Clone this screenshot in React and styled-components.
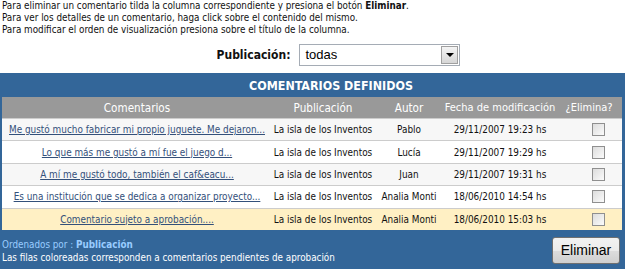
import React from "react";
import styled, { createGlobalStyle } from "styled-components";

const GlobalStyle = createGlobalStyle`
  body {
    margin: 0;
    background: #ffffff;
    font-family: "DejaVu Sans Condensed", "DejaVu Sans", sans-serif;
    color: #000;
  }
`;

const Page = styled.div`
  width: 625px;
  height: 269px;
  overflow: hidden;
  display: flex;
  flex-direction: column;
`;

const Intro = styled.div`
  padding: 0 2px;
  font-size: 9.8px;
  line-height: 12px;
  color: #111;
`;

const FilterRow = styled.div`
  display: flex;
  align-items: center;
  justify-content: center;
  gap: 9px;
  height: 37px;
  padding-left: 52px;
`;

const Label = styled.span`
  font-size: 12px;
  font-weight: bold;
  color: #111;
`;

const Select = styled.div`
  width: 161px;
  height: 22px;
  border: 1px solid #a5acb5;
  display: flex;
  align-items: center;
  justify-content: space-between;
  font-family: "Liberation Sans", Arial, sans-serif;
  font-size: 13px;
  padding-left: 5px;
  box-sizing: border-box;
  background: #fff;
`;

const Arrow = styled.div`
  width: 17px;
  height: 18px;
  margin-right: 1px;
  border: 1px solid #a0a0a0;
  box-sizing: border-box;
  background: linear-gradient(#f4f4f4, #d6d6d6);
  display: flex;
  align-items: center;
  justify-content: center;
  &::after {
    content: "";
    border-left: 4px solid transparent;
    border-right: 4px solid transparent;
    border-top: 4px solid #000;
    margin-top: 1px;
  }
`;

const Panel = styled.div`
  flex: 1;
  background: #336699;
  padding: 0 3px 0 2px;
  display: flex;
  flex-direction: column;
`;

const Title = styled.div`
  height: 24px;
  display: flex;
  align-items: center;
  justify-content: center;
  padding-left: 38px;
  color: #fff;
  font-weight: bold;
  font-size: 12.4px;
`;

const Table = styled.table`
  width: 620px;
  table-layout: fixed;
  border-collapse: collapse;
  font-size: 9.9px;
`;

const Th = styled.th`
  background: #999999;
  color: #fff;
  font-weight: normal;
  font-size: ${(p) => p.$size || "11.6px"};
  height: 21px;
  padding: 0;
  white-space: nowrap;
  width: ${(p) => p.$w};
`;

const Tr = styled.tr`
  background: ${(p) => (p.$pending ? "#fff0c4" : p.$alt ? "#f7f7f7" : "#ffffff")};
  border-top: 1px solid #cccccc;
`;

const Td = styled.td`
  height: 21.4px;
  padding: 0;
  text-align: center;
  white-space: nowrap;
  overflow: hidden;
  color: #111;
`;

const CommentLink = styled.a`
  color: #33507a;
  text-decoration: underline;
  cursor: pointer;
`;

const Check = styled.span`
  display: inline-block;
  width: 13px;
  height: 13px;
  margin-left: 18px;
  box-sizing: border-box;
  border: 1px solid #8f8f8f;
  background: linear-gradient(135deg, #dcdcdc, #fbfbfb);
  vertical-align: middle;
`;

const Footer = styled.div`
  flex: 1;
  display: flex;
  align-items: center;
  justify-content: space-between;
`;

const FooterText = styled.div`
  font-size: 9.8px;
  line-height: 13px;
  color: #fff;
  padding-top: 4px;
`;

const Sort = styled.div`
  color: #99ccff;
  b {
    font-weight: bold;
  }
`;

const Button = styled.button`
  font-family: "Liberation Sans", Arial, sans-serif;
  font-size: 14px;
  color: #000;
  width: 68px;
  height: 27px;
  padding: 0;
  border: 1px solid #707070;
  border-radius: 3px;
  background: linear-gradient(#f2f2f2 0%, #ebebeb 50%, #dddddd 51%, #cfcfcf 100%);
  margin-top: 2px;
  margin-right: 2px;
`;

const rows = [
  ["Me gustó mucho fabricar mi propio juguete. Me dejaron...", "Pablo", "29/11/2007 19:23 hs"],
  ["Lo que más me gustó a mí fue el juego d...", "Lucía", "29/11/2007 19:29 hs"],
  ["A mí me gustó todo, también el caf&eacu...", "Juan", "29/11/2007 19:31 hs"],
  ["Es una institución que se dedica a organizar proyecto...", "Analia Monti", "18/06/2010 14:54 hs"],
  ["Comentario sujeto a aprobación....", "Analia Monti", "18/06/2010 15:03 hs", true],
];

export default function App() {
  return (
    <Page>
      <GlobalStyle />
      <Intro>
        Para eliminar un comentario tilda la columna correspondiente y presiona el botón <b>Eliminar</b>.
        <br />
        Para ver los detalles de un comentario, haga click sobre el contenido del mismo.
        <br />
        Para modificar el orden de visualización presiona sobre el título de la columna.
      </Intro>
      <FilterRow>
        <Label>Publicación:</Label>
        <Select>
          todas
          <Arrow />
        </Select>
      </FilterRow>
      <Panel>
        <Title>COMENTARIOS DEFINIDOS</Title>
        <Table>
          <thead>
            <tr>
              <Th $w="270px">Comentarios</Th>
              <Th $w="102px">Publicación</Th>
              <Th $w="70px">Autor</Th>
              <Th $w="112px" $size="11px">Fecha de modificación</Th>
              <Th $w="66px" $size="11px">¿Elimina?</Th>
            </tr>
          </thead>
          <tbody>
            {rows.map(([c, a, f, pending], i) => (
              <Tr key={i} $alt={i % 2 === 0} $pending={pending}>
                <Td>
                  <CommentLink>{c}</CommentLink>
                </Td>
                <Td>La isla de los Inventos</Td>
                <Td>{a}</Td>
                <Td>{f}</Td>
                <Td>
                  <Check />
                </Td>
              </Tr>
            ))}
          </tbody>
        </Table>
        <Footer>
          <FooterText>
            <Sort>
              Ordenados por : <b>Publicación</b>
            </Sort>
            Las filas coloreadas corresponden a comentarios pendientes de aprobación
          </FooterText>
          <Button>Eliminar</Button>
        </Footer>
      </Panel>
    </Page>
  );
}
